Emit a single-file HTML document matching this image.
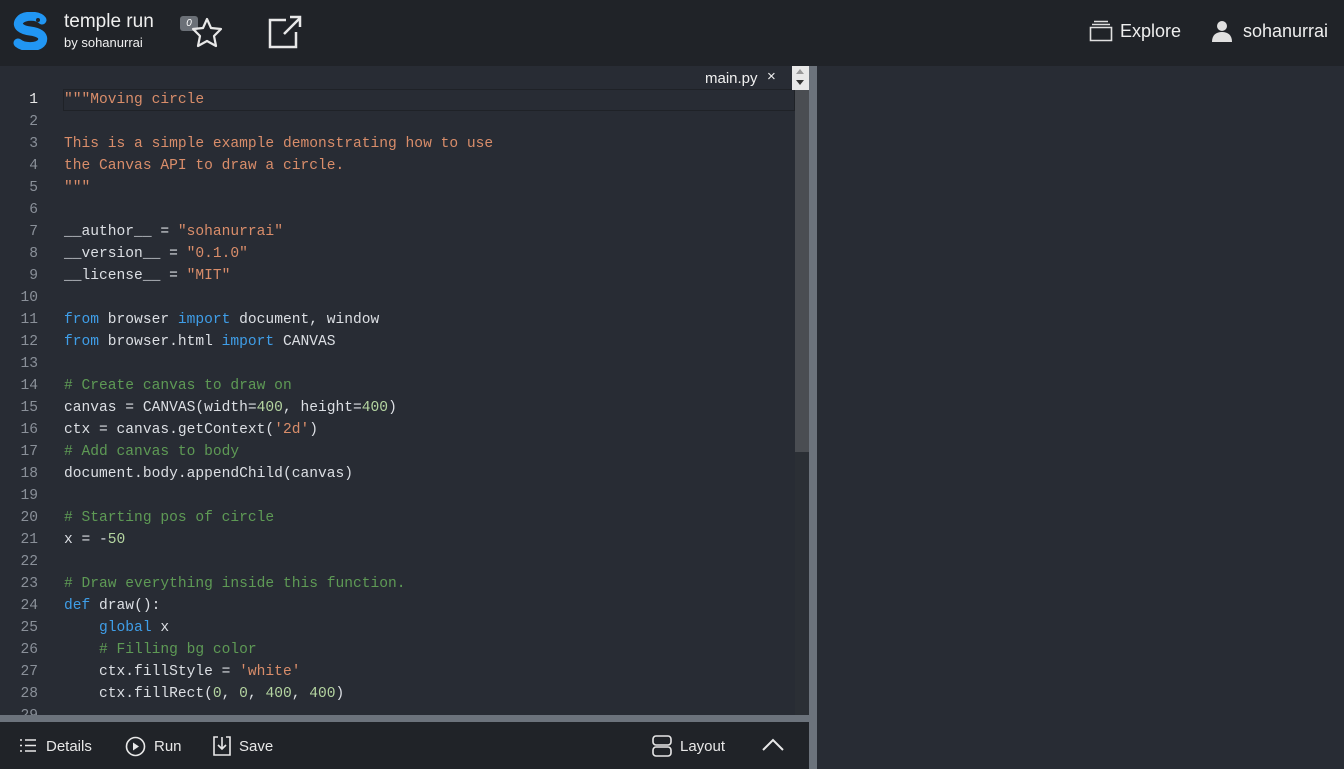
<!DOCTYPE html>
<html><head><style>
*{margin:0;padding:0;box-sizing:border-box}
body{width:1344px;height:769px;background:#282c34;font-family:"Liberation Sans",sans-serif;overflow:hidden;position:relative;color:#e6e6e6}
.hdr{position:absolute;left:0;top:0;width:1344px;height:66px;background:#202328}
.abs{position:absolute}
.editor{position:absolute;left:0;top:66px;width:809px;height:649px;background:#282c34;overflow:hidden}
.code{position:absolute;left:0;top:23px;font-family:"Liberation Mono",monospace;font-size:14.6px;line-height:22px}
.ln{position:absolute;left:0;top:0;width:38px;text-align:right;color:#8a9099}
.tx{position:absolute;left:64px;top:0;color:#dcdfe4;white-space:pre}
.s{color:#d98d6a}.k{color:#3f9ee8}.c{color:#5e9a55}.n{color:#b4d4a0}
.bar{position:absolute;left:0;top:722px;width:809px;height:47px;background:#202328;font-size:15px;color:#e8e8e8}
</style></head><body>
<div class="hdr">
<svg class="abs" style="left:12px;top:12px" width="38" height="38" viewBox="0 0 38 38">
<path d="M30 8 C26 3 12 3 8 8 C3 14 10 18 18 19 C26 20 33 23 30 30 C26 36 12 36 6 31" fill="none" stroke="#2196f3" stroke-width="9" stroke-linecap="round"/>
<circle cx="26" cy="8" r="2" fill="#202328"/>
</svg>
<div class="abs" style="left:64px;top:11px;font-size:19px;color:#f0f0f0">temple run</div>
<div class="abs" style="left:64px;top:35px;font-size:13px;color:#f0f0f0">by sohanurrai</div>
<div class="abs" style="left:180px;top:16px;width:18px;height:15px;background:#6b7077;border-radius:3px;font-size:10px;font-style:italic;text-align:center;line-height:15px;color:#fff">0</div>
<svg class="abs" style="left:190px;top:16px" width="34" height="32" viewBox="0 0 34 32"><path d="M17 3 L21 12 L31 13 L24 20 L26 30 L17 25 L8 30 L10 20 L3 13 L13 12 Z" fill="none" stroke="#e8e8e8" stroke-width="2.2" stroke-linejoin="round"/></svg>
<svg class="abs" style="left:266px;top:14px" width="38" height="36" viewBox="0 0 38 36"><path d="M20 6 H4 V33 H30 V18 M18 20 L34 4 M24 3 H34 V13" fill="none" stroke="#e8e8e8" stroke-width="2.5"/></svg>
<svg class="abs" style="left:1089px;top:20px" width="24" height="22" viewBox="0 0 24 22"><path d="M5 1.5H19M3 4.5H21M1.5 7.5H22.5V20.5H1.5Z" fill="none" stroke="#e0e0e0" stroke-width="1.6"/></svg>
<div class="abs" style="left:1120px;top:21px;font-size:18px;color:#eee">Explore</div>
<svg class="abs" style="left:1211px;top:20px" width="22" height="22" viewBox="0 0 22 22"><circle cx="11" cy="6" r="5" fill="#e0e0e0"/><path d="M1 22 C1 15 5 12 11 12 C17 12 21 15 21 22Z" fill="#e0e0e0"/></svg>
<div class="abs" style="left:1243px;top:21px;font-size:18px;color:#eee">sohanurrai</div>
</div>
<div class="editor">
<div class="abs" style="left:705px;top:4px;font-size:15px;color:#f0f0f0">main.py</div>
<div class="abs" style="left:767px;top:2px;font-size:15px;color:#f0f0f0">×</div>
<div class="abs" style="left:63px;top:23px;width:732px;height:22px;border:1px solid #1f2227"></div>
<div class="code"><div class="ln"><span style="color:#e8e8e8">1</span><br>2<br>3<br>4<br>5<br>6<br>7<br>8<br>9<br>10<br>11<br>12<br>13<br>14<br>15<br>16<br>17<br>18<br>19<br>20<br>21<br>22<br>23<br>24<br>25<br>26<br>27<br>28<br>29</div><div class="tx"><span class="s">"""Moving circle

This is a simple example demonstrating how to use
the Canvas API to draw a circle.
"""</span>

__author__ = <span class="s">"sohanurrai"</span>
__version__ = <span class="s">"0.1.0"</span>
__license__ = <span class="s">"MIT"</span>

<span class="k">from</span> browser <span class="k">import</span> document, window
<span class="k">from</span> browser.html <span class="k">import</span> CANVAS

<span class="c"># Create canvas to draw on</span>
canvas = CANVAS(width=<span class="n">400</span>, height=<span class="n">400</span>)
ctx = canvas.getContext(<span class="s">'2d'</span>)
<span class="c"># Add canvas to body</span>
document.body.appendChild(canvas)

<span class="c"># Starting pos of circle</span>
x = -<span class="n">50</span>

<span class="c"># Draw everything inside this function.</span>
<span class="k">def</span> draw():
    <span class="k">global</span> x
    <span class="c"># Filling bg color</span>
    ctx.fillStyle = <span class="s">'white'</span>
    ctx.fillRect(<span class="n">0</span>, <span class="n">0</span>, <span class="n">400</span>, <span class="n">400</span>)
</div></div>
<div class="abs" style="left:795px;top:0;width:14px;height:649px;background:#2b2f35"></div>
<div class="abs" style="left:795px;top:24px;width:14px;height:362px;background:#4a4d52"></div>
<div class="abs" style="left:792px;top:0;width:17px;height:24px;background:#e8e8e8"></div>
<div class="abs" style="left:796px;top:3px;width:0;height:0;border-left:4px solid transparent;border-right:4px solid transparent;border-bottom:5px solid #999"></div>
<div class="abs" style="left:796px;top:14px;width:0;height:0;border-left:4px solid transparent;border-right:4px solid transparent;border-top:5px solid #333"></div>
</div>
<div class="abs" style="left:809px;top:66px;width:8px;height:703px;background:#6c737c"></div>
<div class="abs" style="left:0;top:715px;width:809px;height:7px;background:#6c737c"></div>
<div class="bar">
<svg class="abs" style="left:19px;top:16px" width="18" height="15" viewBox="0 0 18 15"><path d="M1 2h2M1 7.5h2M1 13h2M6 2h11M6 7.5h11M6 13h11" stroke="#e8e8e8" stroke-width="1.6"/></svg>
<div class="abs" style="left:46px;top:16px">Details</div>
<svg class="abs" style="left:125px;top:14px" width="21" height="21" viewBox="0 0 21 21"><circle cx="10.5" cy="10.5" r="9" fill="none" stroke="#e8e8e8" stroke-width="1.6"/><path d="M8 6.5L14 10.5L8 14.5Z" fill="#e8e8e8"/></svg>
<div class="abs" style="left:154px;top:16px">Run</div>
<svg class="abs" style="left:212px;top:13px" width="20" height="22" viewBox="0 0 20 22"><path d="M6 2H2V20H18V2H14M10 2V14M6 10L10 14L14 10" fill="none" stroke="#e8e8e8" stroke-width="1.6"/></svg>
<div class="abs" style="left:239px;top:16px">Save</div>
<svg class="abs" style="left:652px;top:13px" width="20" height="22" viewBox="0 0 20 22"><rect x="1" y="1" width="18" height="9" rx="3" fill="none" stroke="#e8e8e8" stroke-width="1.6"/><rect x="1" y="12" width="18" height="9" rx="3" fill="none" stroke="#e8e8e8" stroke-width="1.6"/></svg>
<div class="abs" style="left:680px;top:16px">Layout</div>
<svg class="abs" style="left:761px;top:16px" width="24" height="14" viewBox="0 0 24 14"><path d="M2 12L12 2L22 12" fill="none" stroke="#e8e8e8" stroke-width="2"/></svg>
</div>
</body></html>
